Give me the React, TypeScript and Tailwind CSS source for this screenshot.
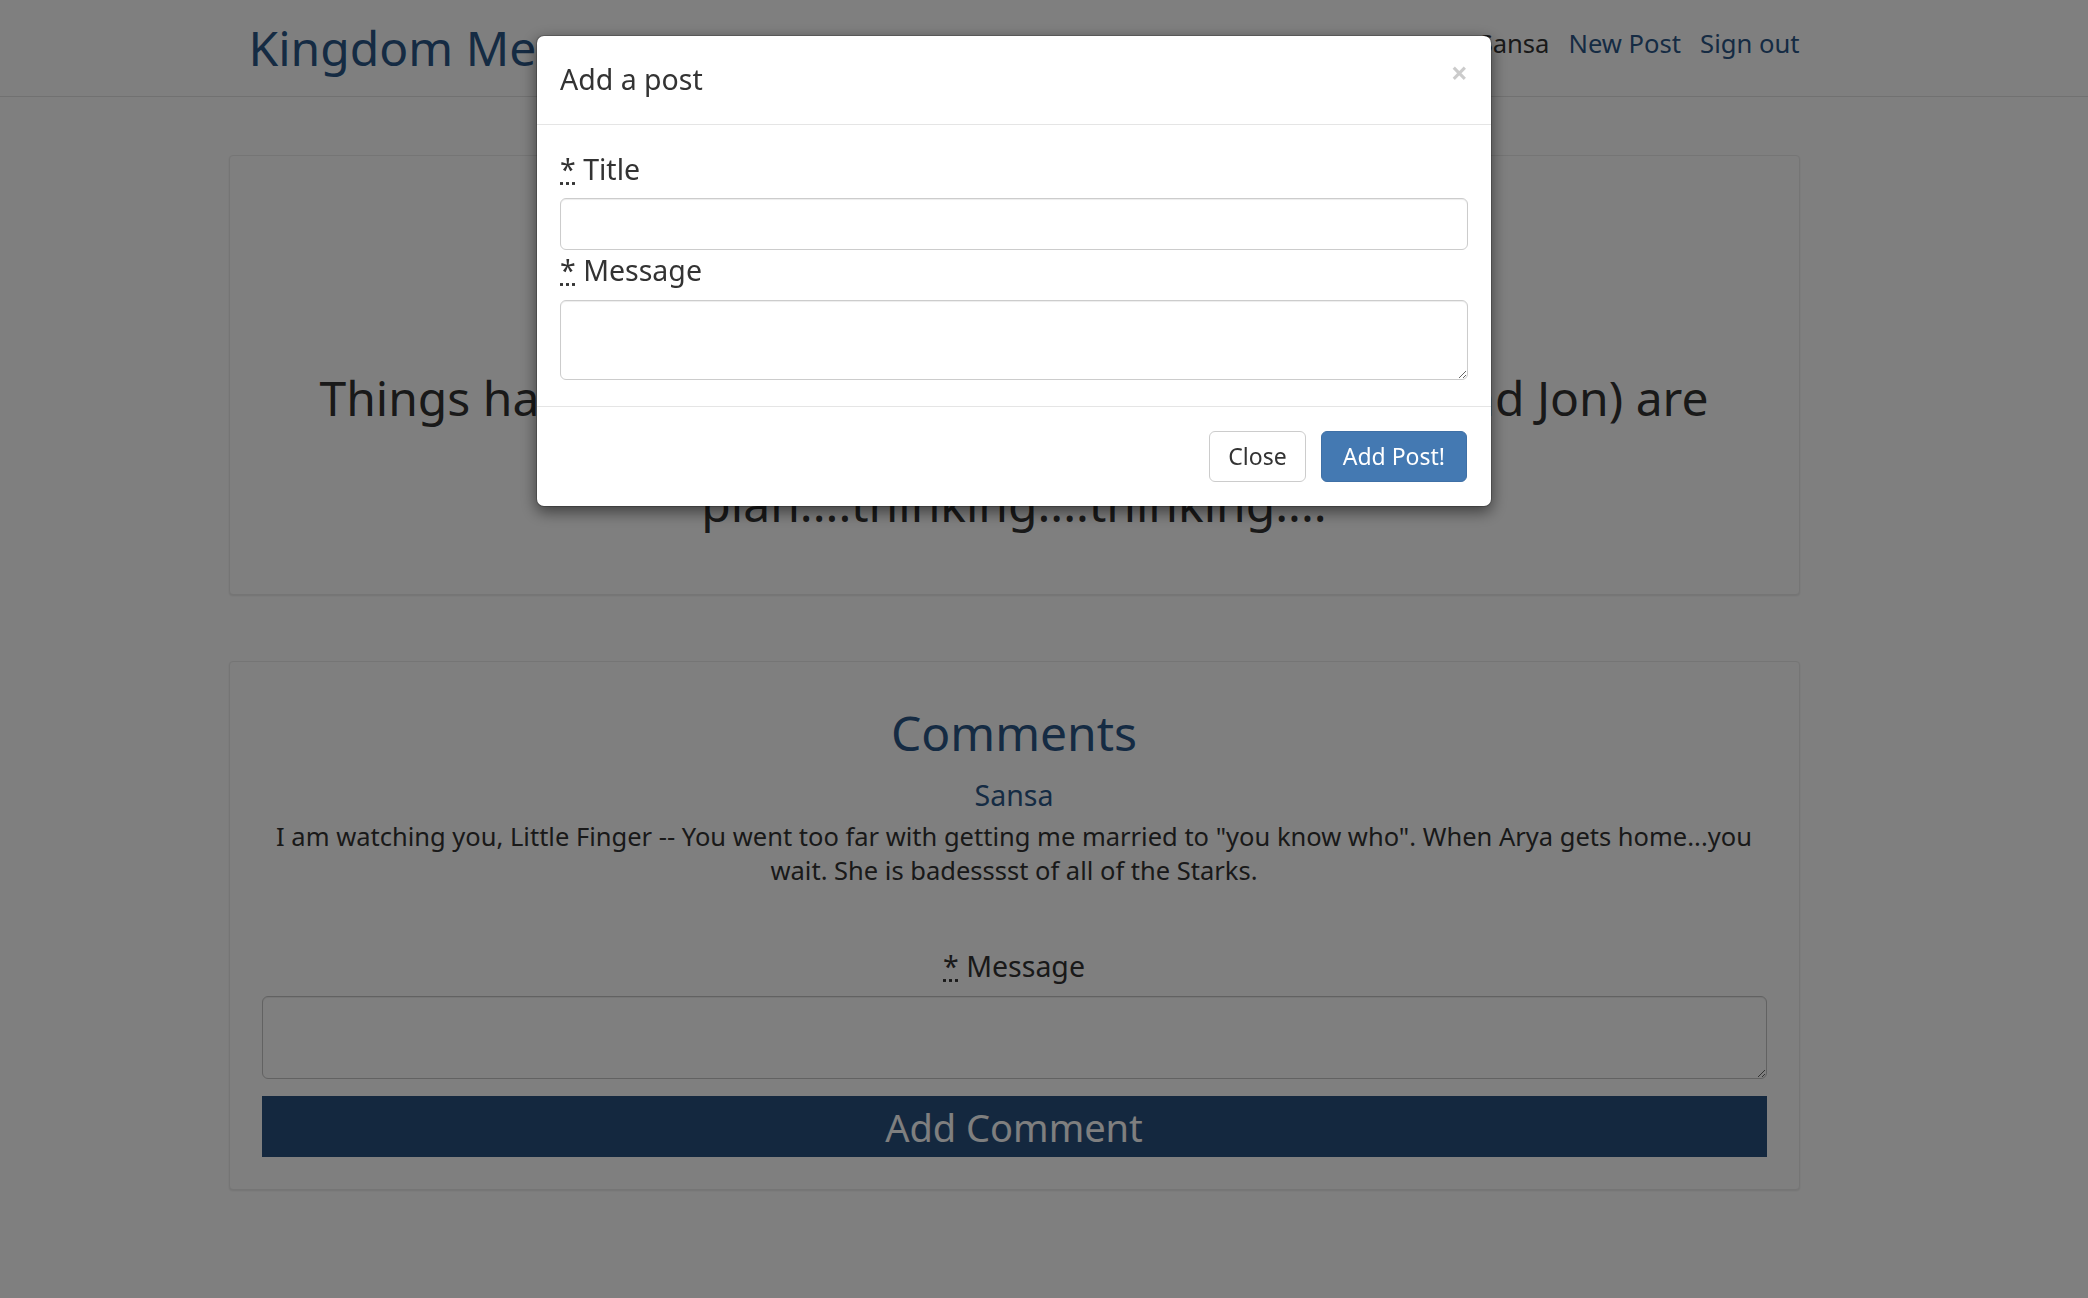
const NAVY = 'text-[#2b5687]';

function RequiredLabel({ text, className = '' }: { text: string; className?: string }) {
    return (
        <label className={`block text-[28.5px] leading-[40px] text-[#333] ${className}`}>
            <abbr title="required" className="no-underline [text-decoration:underline_dotted] cursor-help">*</abbr> {text}
        </label>
    );
}

function Navbar() {
    return (
        <div className="h-[97px] w-full border-b border-[#e3e3e3] bg-white">
            <div className="w-[2028px]">
                <div className="mx-auto flex w-[1571px] justify-between">
                    <div className="flex h-[96px] items-center pl-[20px]">
                        <span className={`text-[48px] leading-none ${NAVY}`}>Kingdom Messenger</span>
                    </div>
                    <div className="mt-[31px] flex gap-[19px] text-[25.6px] leading-none">
                        <span className="text-[#333]">Sansa</span>
                        <a className={NAVY}>New Post</a>
                        <a className={NAVY}>Sign out</a>
                    </div>
                </div>
            </div>
        </div>
    );
}

function PostPanel() {
    return (
        <div className="mx-auto mt-[58px] w-[1571px] rounded-[4px] border border-[#ebebeb] bg-white px-[32px] pb-[64px] pt-[48px] text-center shadow-[0_1px_2px_rgba(0,0,0,0.1)]">
            <h2 className={`text-[40px] leading-[53px] ${NAVY}`}>Winter is Here</h2>
            <p className="mt-[10px] text-[28px] leading-[40px] text-[#333]">Sansa</p>
            <h1 className="mt-[65px] text-[48px] leading-[1.1] text-[#333]">
                Things have changed now. The Starks (Arya, Bran and Jon) are
                <br />
                back home and we need a
                <br />
                plan....thinking....thinking....
            </h1>
        </div>
    );
}

function CommentsPanel() {
    return (
        <div className="mx-auto mt-[66px] w-[1571px] rounded-[4px] border border-[#ebebeb] bg-white px-[32px] pb-[32px] pt-[32px] text-center shadow-[0_1px_2px_rgba(0,0,0,0.1)]">
            <h2 className={`mt-[13px] text-[48px] leading-[1.1] ${NAVY}`}>Comments</h2>
            <div className={`mt-[15px] text-[28.5px] leading-[40px] ${NAVY}`}>Sansa</div>
            <p className="mt-[4px] text-[25.5px] leading-[34px] text-[#333]">
                I am watching you, Little Finger -- You went too far with getting me married to "you know who". When Arya gets home...you wait. She is badesssst of all of the Starks.
            </p>
            <form className="mt-[59px]" onSubmit={(e) => e.preventDefault()}>
                <RequiredLabel text="Message" />
                <textarea className="mt-[10px] block h-[83px] w-full rounded-[6px] border border-[#c4c4c4] bg-white shadow-[inset_0_1px_1px_rgba(0,0,0,0.075)]" />
                <button className="mt-[17px] block h-[61px] w-full bg-[#28507e] text-[38px] leading-none text-white">
                    Add Comment
                </button>
            </form>
        </div>
    );
}

function AddPostModal() {
    return (
        <div className="fixed inset-0 bg-black/50">
            <div className="flex w-[2028px] justify-center pt-[35px]">
                <div className="w-[956px] rounded-[8px] border border-black/20 bg-white bg-clip-padding shadow-[0_5px_15px_rgba(0,0,0,0.5)]">
                    <div className="flex items-start justify-between border-b border-[#e5e5e5] px-[23px] pb-[25px] pt-[23px]">
                        <h4 className="text-[28.5px] leading-[40px] text-[#333]">Add a post</h4>
                        <button className="-mt-[1px] text-[30px] font-bold leading-none text-black opacity-20">×</button>
                    </div>
                    <div className="px-[23px] pb-[26px] pt-[24px]">
                        <RequiredLabel text="Title" />
                        <input className="mt-[9px] block h-[52px] w-full rounded-[6px] border border-[#ccc] shadow-[inset_0_1px_1px_rgba(0,0,0,0.075)]" />
                        <RequiredLabel text="Message" />
                        <textarea className="mt-[10px] block h-[80px] w-full rounded-[6px] border border-[#ccc] shadow-[inset_0_1px_1px_rgba(0,0,0,0.075)]" />
                    </div>
                    <div className="flex justify-end gap-[15px] border-t border-[#e5e5e5] px-[24px] py-[24px]">
                        <button className="h-[51px] rounded-[6px] border border-[#ccc] bg-white px-[18px] text-[23px] text-[#333]">Close</button>
                        <button className="h-[51px] rounded-[6px] border border-[#3f70a6] bg-[#4479b2] px-[21px] text-[23px] text-white">Add Post!</button>
                    </div>
                </div>
            </div>
        </div>
    );
}

export default function App() {
    return (
        <div className="min-h-screen bg-white font-['Noto_Sans',sans-serif]">
            <Navbar />
            <div className="w-[2028px]">
                <PostPanel />
                <CommentsPanel />
            </div>
            <AddPostModal />
        </div>
    );
}
